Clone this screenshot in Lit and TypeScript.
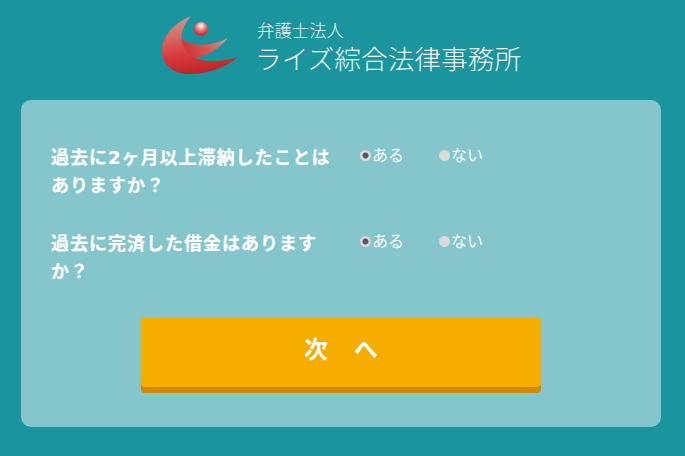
import { LitElement, html, css, svg } from "lit";
import { customElement } from "lit/decorators.js";

const QUESTIONS = [
  { name: "q1", text: "過去に2ヶ月以上滞納したことはありますか？" },
  { name: "q2", text: "過去に完済した借金はありますか？" },
];

const logo = svg`
  <defs>
    <linearGradient id="outer" x1="0.25" y1="0" x2="0.45" y2="1">
      <stop offset="0" stop-color="#c49a96"/>
      <stop offset="0.3" stop-color="#d66e67"/>
      <stop offset="0.65" stop-color="#d93a3a"/>
      <stop offset="1" stop-color="#bd242b"/>
    </linearGradient>
    <linearGradient id="arm" x1="0" y1="0.6" x2="1" y2="0.3">
      <stop offset="0" stop-color="#cf2a31"/>
      <stop offset="0.6" stop-color="#d95c58"/>
      <stop offset="1" stop-color="#a9a9a2"/>
    </linearGradient>
    <radialGradient id="ball" cx="0.5" cy="0.28" r="0.72">
      <stop offset="0" stop-color="#fff"/>
      <stop offset="0.3" stop-color="#f0a9a0"/>
      <stop offset="0.75" stop-color="#dc3b3c"/>
      <stop offset="1" stop-color="#b93236"/>
    </radialGradient>
  </defs>
  <path fill="url(#arm)" d="M17 22C15 36 22 46 34 46C48 44 60 36 68 26C56 32 44 34 34 32C26 30 20 28 17 22Z"/>
  <path fill="url(#outer)" d="M31 4C12 12 2 26 2 38C2 54 14 62 30 62C50 62 68 54 78 45C62 50 48 50 38 47C22 42 14 24 31 4Z"/>
  <circle cx="41" cy="17" r="7" fill="url(#ball)"/>
`;

@customElement("app-root")
export class AppRoot extends LitElement {
  static styles = css`
    :host {
      display: block;
      height: 456px;
      background: #1b959d;
      color: #fff;
      font-family: "DejaVu Sans", "Noto Sans CJK JP", sans-serif;
      overflow: hidden;
    }
    .header {
      height: 100px;
      box-sizing: border-box;
      padding: 12px 0 0 160px;
      display: flex;
      align-items: flex-start;
      gap: 13px;
    }
    .logo { width: 82px; height: 66px; flex: none; }
    .firm {
      display: flex;
      flex-direction: column;
      font-family: "Noto Sans CJK JP", sans-serif;
      font-weight: 300;
      color: #eef8f7;
      padding-top: 7px;
    }
    .sub { font-size: 17.4px; line-height: 22px; margin-left: 2px; }
    .name { font-size: 26.7px; line-height: 34px; white-space: nowrap; }
    .card {
      margin: 0 24px 0 21px;
      height: 327px;
      box-sizing: border-box;
      background: #84c6cb;
      border-radius: 10px;
      padding: 44px 30px 0;
    }
    .row {
      display: grid;
      grid-template-columns: 284px 1fr;
      gap: 25px;
      margin-bottom: 30px;
    }
    .q {
      font-size: 18px;
      font-weight: 700;
      letter-spacing: 1px;
      line-height: 28px;
      -webkit-text-stroke: 0.2px #fff;
    }
    .opts { display: flex; align-items: flex-start; gap: 34px; font-size: 16px; line-height: 24px; }
    label { display: flex; align-items: center; gap: 1px; width: 45px; white-space: nowrap; }
    input {
      appearance: none;
      margin: 0;
      width: 11px;
      height: 11px;
      border-radius: 50%;
      background: #dcd9d9;
      flex: none;
      position: relative;
      top: -1px;
    }
    input:checked {
      background: radial-gradient(circle, #5f5560 0 2.6px, #dcd9d9 3.4px);
    }
    .next {
      display: block;
      width: 400px;
      height: 76px;
      margin: 31px 0 0 90px;
      padding: 0 0 16px 1px;
      border: 0;
      border-radius: 4px;
      background: #f7ac00;
      box-shadow: inset 0 -6px 0 #d08a00;
      color: #fff;
      font: 700 24px "DejaVu Sans", "Noto Sans CJK JP", sans-serif;
      letter-spacing: 1px;
    }
  `;

  render() {
    return html`
      <header class="header">
        <svg class="logo" viewBox="0 0 82 66">${logo}</svg>
        <div class="firm">
          <span class="sub">弁護士法人</span>
          <span class="name">ライズ綜合法律事務所</span>
        </div>
      </header>
      <main class="card">
        ${QUESTIONS.map(
          (q) => html`
            <div class="row">
              <div class="q">${q.text}</div>
              <div class="opts">
                <label><input type="radio" name=${q.name} checked />ある</label>
                <label><input type="radio" name=${q.name} />ない</label>
              </div>
            </div>
          `
        )}
        <button class="next">次　へ</button>
      </main>
    `;
  }
}
